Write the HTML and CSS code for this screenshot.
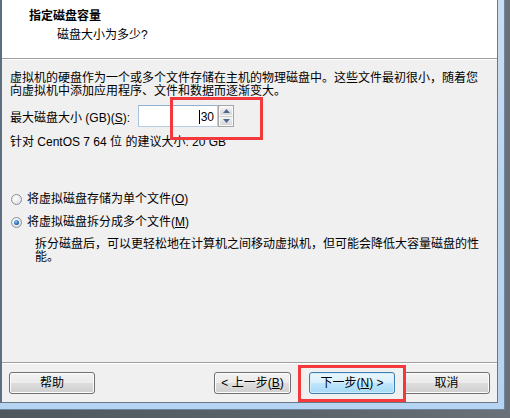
FILE: index.html
```html
<!DOCTYPE html>
<html lang="zh-CN">
<head>
<meta charset="utf-8">
<link rel="stylesheet" href="styles.css">
</head>
<body>
<div class="frame">
  <div class="client">
    <div class="header">
      <div class="title">指定磁盘容量</div>
      <div class="subtitle">磁盘大小为多少?</div>
    </div>
    <div class="main">
      <p class="para">虚拟机的硬盘作为一个或多个文件存储在主机的物理磁盘中。这些文件最初很小，随着您<br>向虚拟机中添加应用程序、文件和数据而逐渐变大。</p>
      <div class="size-row">
        <span class="label">最大磁盘大小 (GB)(<u>S</u>):</span>
        <div class="spin">
          <div class="field"><span class="caret"></span><span>30</span></div>
          <div class="spin-btns">
            <div class="sbtn"><svg width="7" height="4" viewBox="0 0 7 4"><path d="M0 4 L3.5 0 L7 4 Z" fill="#4d6a8e"/></svg></div>
            <div class="sbtn"><svg width="7" height="4" viewBox="0 0 7 4"><path d="M0 0 L7 0 L3.5 4 Z" fill="#4d6a8e"/></svg></div>
          </div>
        </div>
        <div class="mark mark-size"></div>
      </div>
      <p class="hint">针对 CentOS 7 64 位 的建议大小: 20 GB</p>
      <div class="radio-row r1"><span class="radio"></span><span>将虚拟磁盘存储为单个文件(<u>O</u>)</span></div>
      <div class="radio-row r2"><span class="radio checked"></span><span>将虚拟磁盘拆分成多个文件(<u>M</u>)</span></div>
      <p class="desc">拆分磁盘后，可以更轻松地在计算机之间移动虚拟机，但可能会降低大容量磁盘的性<br>能。</p>
    </div>
    <div class="footer">
      <button class="btn help">帮助</button>
      <div class="nav">
        <button class="btn prev">&lt; 上一步(<u>B</u>)</button>
        <div class="next-wrap">
          <button class="btn next default">下一步(<u>N</u>) &gt;</button>
          <div class="mark mark-next"></div>
        </div>
        <button class="btn cancel">取消</button>
      </div>
    </div>
  </div>
</div>
</body>
</html>
```

FILE: styles.css
```css
* { box-sizing: border-box; }
html, body { margin: 0; padding: 0; }
body {
  width: 510px;
  height: 418px;
  overflow: hidden;
  background: linear-gradient(90deg, #4f575f 0%, #5b636b 60%, #6a7178 100%);
  font-family: "Liberation Sans", "Noto Sans CJK SC", sans-serif;
  font-size: 12px;
  color: #000;
}
.frame {
  width: 505px;
  height: 410px;
  padding: 0 6px 6px 0;
  background: linear-gradient(180deg, #c9def3 0%, #bcd6ef 50%, #b6d3f1 100%);
  border-right: 1px solid #6f859c;
  border-bottom: 1px solid #6f859c;
}
.client {
  width: 498px;
  height: 403px;
  background: #f0f0f0;
  border-left: 2px solid #5c6e80;
  border-right: 1px solid #6b7886;
  border-bottom: 1px solid #6b7886;
  display: flex;
  flex-direction: column;
}
.header {
  height: 59px;
  background: #fff;
  border-bottom: 1px solid #a0a0a0;
  padding: 10px 0 0 27px;
}
.title {
  font-weight: bold;
  line-height: 13px;
  height: 13px;
}
.subtitle {
  margin-top: 6px;
  padding-left: 28px;
  line-height: 13px;
}
.main {
  border-top: 1px solid #fff;
  padding: 12px 0 0 8px;
}
p { margin: 0; }
.para { line-height: 13px; }
.size-row {
  position: relative;
  margin-top: 7px;
  height: 22px;
  display: flex;
  align-items: center;
}
.label {
  flex: none;
  width: 128px;
  white-space: nowrap;
  padding-top: 4px;
  line-height: 13px;
}
.spin {
  flex: none;
  display: flex;
  height: 22px;
}
.field {
  width: 80px;
  height: 22px;
  background: #fff;
  border: 1px solid #b9cde2;
  border-top-color: #8fb0d3;
  border-left-color: #a9c3de;
  display: flex;
  justify-content: flex-end;
  align-items: center;
  padding-right: 3px;
  line-height: 13px;
  padding-top: 2px;
}
.caret {
  width: 1px;
  height: 14px;
  background: #000;
  margin-right: 1px;
}
.spin-btns {
  width: 16px;
  height: 22px;
  display: flex;
  flex-direction: column;
  border: 1px solid #a7a7a7;
  background: #e9e9e9;
}
.sbtn {
  flex: 1;
  display: flex;
  align-items: center;
  justify-content: center;
  background: linear-gradient(180deg, #f6f6f6 0%, #e4e4e4 50%, #d7d7d7 100%);
  border: 1px solid #fbfbfb;
  border-radius: 2px;
}
.sbtn + .sbtn { border-top-color: #c8c8c8; }
.mark {
  position: absolute;
  border: 3px solid #f3393b;
  pointer-events: none;
}
.mark-size {
  left: 160px;
  top: -8px;
  width: 93px;
  height: 43px;
}
.hint {
  margin-top: 9px;
  line-height: 13px;
}
.radio-row {
  display: flex;
  align-items: center;
  line-height: 13px;
  height: 13px;
}
.r1 { margin-top: 44px; }
.r2 { margin-top: 10px; }
.radio {
  flex: none;
  width: 11px;
  height: 11px;
  margin: 0 5px 0 1px;
  border-radius: 50%;
  border: 1px solid #8d9197;
  background: radial-gradient(circle at 40% 35%, #ffffff 0%, #eceef0 45%, #d2d5d9 100%);
  position: relative;
}
.radio.checked::after {
  content: "";
  position: absolute;
  left: 2px;
  top: 2px;
  width: 5px;
  height: 5px;
  border-radius: 50%;
  background: radial-gradient(circle at 40% 35%, #8cc8f4 0%, #2a6fb8 55%, #0f3f7d 100%);
}
.desc {
  margin-top: 9px;
  padding-left: 25px;
  line-height: 13px;
}
.footer {
  margin-top: auto;
  height: 40px;
  border-top: 1px solid #a0a0a0;
  padding: 9px 7px 8px 7px;
  display: flex;
  justify-content: space-between;
  box-shadow: inset 0 1px 0 #fff;
}
.nav {
  display: flex;
}
.btn {
  font-family: "Liberation Sans", "Noto Sans CJK SC", sans-serif;
  font-size: 12px;
  color: #000;
  height: 22px;
  padding: 1px 0 0 0;
  line-height: 13px;
  border: 1px solid #707070;
  border-radius: 3px;
  background: linear-gradient(180deg, #f2f2f2 0%, #ebebeb 48%, #dddddd 52%, #cfcfcf 100%);
  box-shadow: inset 0 0 0 1px #fcfcfc;
  text-align: center;
}
.help { width: 86px; }
.prev { width: 77px; margin-right: 18px; }
.next-wrap { position: relative; }
.next {
  width: 86px;
  border-color: #3c7fb1;
  background: linear-gradient(180deg, #eaf6fd 0%, #d9f0fc 48%, #bee6fd 52%, #a7d9f5 100%);
  box-shadow: inset 0 0 0 1px #d4ecfb;
}
.cancel { width: 87px; margin-left: 8px; }
.mark-next {
  left: -11px;
  top: -7px;
  width: 108px;
  height: 37px;
}
```
